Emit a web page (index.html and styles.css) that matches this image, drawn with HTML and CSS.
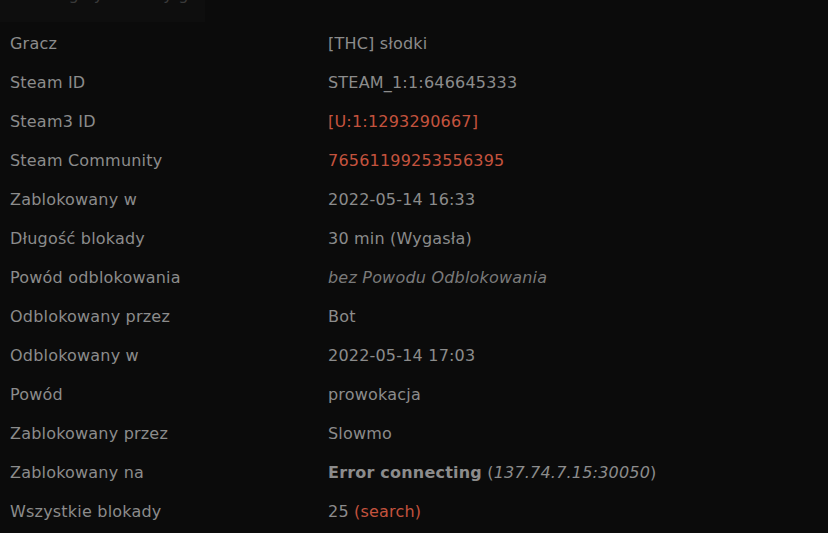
FILE: index.html
```html
<!DOCTYPE html>
<html>
<head>
<meta charset="utf-8">
<link rel="stylesheet" href="styles.css">
</head>
<body>
<div class="page">
  <div class="top">
    <div class="tab"><span class="tab-text">Szczegóły blokady gracza</span></div>
  </div>
  <table class="details">
    <tr><td class="label">Gracz</td><td class="value">[THC] słodki</td></tr>
    <tr><td class="label">Steam ID</td><td class="value">STEAM_1:1:646645333</td></tr>
    <tr><td class="label">Steam3 ID</td><td class="value"><a class="link">[U:1:1293290667]</a></td></tr>
    <tr><td class="label">Steam Community</td><td class="value"><a class="link">76561199253556395</a></td></tr>
    <tr><td class="label">Zablokowany w</td><td class="value">2022-05-14 16:33</td></tr>
    <tr><td class="label">Długość blokady</td><td class="value">30 min (Wygasła)</td></tr>
    <tr><td class="label">Powód odblokowania</td><td class="value"><i class="muted">bez Powodu Odblokowania</i></td></tr>
    <tr><td class="label">Odblokowany przez</td><td class="value">Bot</td></tr>
    <tr><td class="label">Odblokowany w</td><td class="value">2022-05-14 17:03</td></tr>
    <tr><td class="label">Powód</td><td class="value">prowokacja</td></tr>
    <tr><td class="label">Zablokowany przez</td><td class="value">Slowmo</td></tr>
    <tr><td class="label">Zablokowany na</td><td class="value"><b>Error connecting</b> (<i>137.74.7.15:30050</i>)</td></tr>
    <tr><td class="label">Wszystkie blokady</td><td class="value">25 <a class="link">(search)</a></td></tr>
  </table>
</div>
</body>
</html>
```
FILE: styles.css
```css
html, body {
  margin: 0;
  padding: 0;
  background: #0b0b0b;
}
body {
  font-family: "DejaVu Sans", Verdana, sans-serif;
  font-size: 16px;
  letter-spacing: 0.2px;
  color: #8c8c8c;
}
.page {
  width: 828px;
  height: 533px;
  overflow: hidden;
}
.top {
  height: 24px;
  display: flex;
}
.tab {
  width: 205px;
  height: 22px;
  background: #0e0e0e;
  overflow: hidden;
  position: relative;
}
.tab-text {
  position: absolute;
  left: 22px;
  top: -15px;
  font-size: 16px;
  color: #3a3a3a;
  white-space: nowrap;
}
.details {
  border-collapse: collapse;
  width: 100%;
}
.details td {
  padding: 0 10px;
  height: 39px;
  line-height: 19px;
  vertical-align: middle;
  white-space: nowrap;
}
.details td.label {
  width: 298px;
}
.link {
  color: #c4533e;
  text-decoration: none;
}
.muted {
  color: #7a7a7a;
}
b {
  font-weight: bold;
}
```
